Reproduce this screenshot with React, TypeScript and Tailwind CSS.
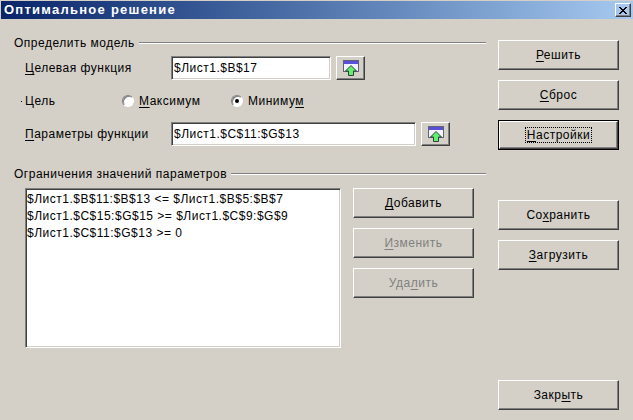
// App.tsx
const bevel = "border border-t-white border-l-white border-r-[#404040] border-b-[#404040] shadow-[inset_-1px_-1px_0_#808080]";
const sunken = "border border-t-[#808080] border-l-[#808080] border-r-white border-b-white shadow-[inset_1px_1px_0_#404040,inset_-1px_-1px_0_#d4d0c8]";

function Key({ children }: { children: string }) {
  return <span className="underline underline-offset-2">{children}</span>;
}

function PushButton({
  children,
  className = "",
  disabled = false,
}: {
  children: React.ReactNode;
  className?: string;
  disabled?: boolean;
}) {
  return (
    <div className={`flex items-center justify-center ${bevel} ${disabled ? "text-[#808080]" : "text-black"} ${className}`}>
      {children}
    </div>
  );
}

function ShrinkIcon() {
  return (
    <svg width="16" height="16" viewBox="0 0 16 16">
      {/* window */}
      <rect x="0" y="0" width="16" height="12" fill="#606078" shapeRendering="crispEdges" />
      <rect x="1" y="1" width="14" height="10" fill="#f4f4ff" shapeRendering="crispEdges" />
      <rect x="1" y="1" width="14" height="3" fill="#5a50d8" shapeRendering="crispEdges" />
      {/* arrow */}
      <path d="M8 5.5 L13.5 11 L10.5 11 L10.5 15.5 L5.5 15.5 L5.5 11 L2.5 11 Z" fill="#60f070" stroke="#304038" />
    </svg>
  );
}

function IconButton({ className = "" }: { className?: string }) {
  return (
    <div className={`flex h-[24px] w-[29px] items-center justify-center ${bevel} ${className}`}>
      <ShrinkIcon />
    </div>
  );
}

function Legend({ children }: { children: string }) {
  return (
    <div className="flex h-[16px] items-center gap-[4px] pl-[13px]">
      <span className="whitespace-nowrap">{children}</span>
      <div className="h-[2px] flex-1 border-t border-t-[#808080] border-b border-b-white" />
    </div>
  );
}

function Radio({ checked }: { checked?: boolean }) {
  return (
    <span className="flex h-[12px] w-[12px] items-center justify-center rounded-full border border-t-[#808080] border-l-[#808080] border-r-white border-b-white bg-white shadow-[inset_1px_1px_0_#808080]">
      {checked && <span className="h-[4px] w-[4px] rounded-full bg-black" />}
    </span>
  );
}

export default function App() {
  const rules = [
    "$Лист1.$B$11:$B$13 <= $Лист1.$B$5:$B$7",
    "$Лист1.$C$15:$G$15 >= $Лист1.$C$9:$G$9",
    "$Лист1.$C$11:$G$13 >= 0",
  ];

  return (
    <div className="h-[420px] w-[633px] overflow-hidden bg-[#d4d0c8] pt-px pl-px font-['Liberation_Sans',sans-serif] text-[12px] leading-[14px] tracking-[0.5px] text-black">
      <div className="flex h-[18px] items-center justify-between bg-gradient-to-r from-[#0a246a] to-[#a6caf0] pr-[2px] pl-[3px]">
        <span className="text-[13px] font-bold tracking-[1.25px] text-white">Оптимальное решение</span>
        <div className={`flex h-[14px] w-[16px] items-center justify-center ${bevel}`}>
          <svg width="8" height="7" viewBox="0 0 8 7" shapeRendering="crispEdges">
            <path d="M0 0h2v1h1v1h2v-1h1v-1h2v1h-1v1h-1v1h-1v1h1v1h1v1h1v1h-2v-1h-1v-1h-2v1h-1v1h-2v-1h1v-1h1v-1h1v-1h-1v-1h-1v-1h-1z" fill="#000" />
          </svg>
        </div>
      </div>

      <div className="flex pt-[16px]">
        <div className="w-[485px]">
          <Legend>Определить модель</Legend>

          <div className="mt-[5px] flex h-[24px] pl-[24px]">
            <span className="w-[146px] self-center"><Key>Ц</Key>елевая функция</span>
            <div className={`flex h-[24px] w-[160px] items-center bg-white pl-[2px] ${sunken}`}>$Лист1.$B$17</div>
            <IconButton className="ml-[5px]" />
          </div>

          <div className="mt-[9px] flex h-[24px] items-center pl-[24px]">
            <span className="-ml-[4px] mr-[3px] h-px w-px bg-black" />
            <span className="w-[97px]">Цель</span>
            <Radio />
            <span className="ml-[5px] w-[92px]"><Key>М</Key>аксимум</span>
            <Radio checked />
            <span className="ml-[5px]">Миниму<Key>м</Key></span>
          </div>

          <div className="mt-[9px] flex h-[24px] pl-[24px]">
            <span className="w-[146px] self-center"><Key>П</Key>араметры функции</span>
            <div className={`flex h-[24px] w-[245px] items-center bg-white pl-[2px] ${sunken}`}>$Лист1.$C$11:$G$13</div>
            <IconButton className="ml-[5px]" />
          </div>

          <div className="mt-[20px]">
            <Legend>Ограничения значений параметров</Legend>
          </div>

          <div className="mt-[6px] flex pl-[24px]">
            <div className={`h-[160px] w-[316px] bg-white pt-[2px] pl-[1px] ${sunken}`}>
              {rules.map((rule) => (
                <div key={rule} className="h-[17px] leading-[16px] whitespace-nowrap">{rule}</div>
              ))}
            </div>
            <div className="ml-[12px] flex flex-col gap-[10px]">
              <PushButton className="h-[30px] w-[121px]"><span><Key>Д</Key>обавить</span></PushButton>
              <PushButton disabled className="h-[30px] w-[121px]"><span><Key>И</Key>зменить</span></PushButton>
              <PushButton disabled className="h-[30px] w-[121px]"><span>Уда<Key>л</Key>ить</span></PushButton>
            </div>
          </div>
        </div>

        <div className="mt-[5px] ml-[12px] flex h-[370px] w-[121px] flex-col">
          <PushButton className="h-[30px]"><span><Key>Р</Key>ешить</span></PushButton>
          <PushButton className="mt-[10px] h-[30px]"><span><Key>С</Key>брос</span></PushButton>
          <div className="mt-[10px] h-[30px] border border-black">
            <PushButton className="h-full">
              <span className="border border-dotted border-black px-px"><Key>Н</Key>астройки</span>
            </PushButton>
          </div>
          <PushButton className="mt-[50px] h-[30px]"><span>Со<Key>х</Key>ранить</span></PushButton>
          <PushButton className="mt-[10px] h-[30px]"><span><Key>З</Key>агрузить</span></PushButton>
          <PushButton className="mt-auto h-[30px]"><span>Закр<Key>ы</Key>ть</span></PushButton>
        </div>
      </div>
    </div>
  );
}
